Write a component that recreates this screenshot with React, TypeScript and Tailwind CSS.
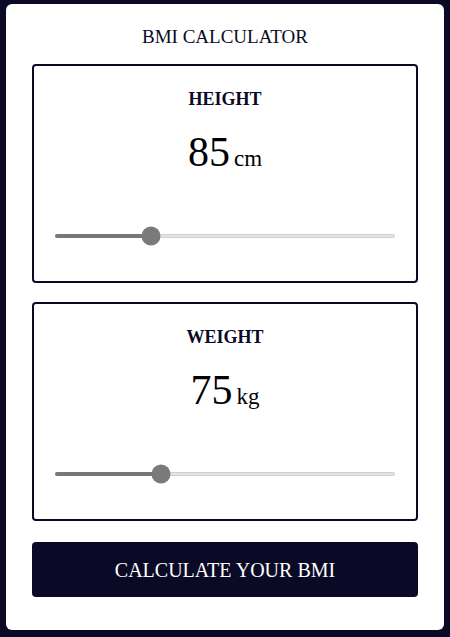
export default function App() {
  return (
    <div className="h-[637px] w-[450px] bg-[#0b0a26] px-[6px] pt-[4px] font-['Liberation_Serif','DejaVu_Serif',serif]">
      <div className="flex h-[626px] flex-col rounded-[6px] bg-white px-[26px] pt-[22px]">
        <h1 className="text-center text-[19px] leading-[22px] text-[#0b0a26]">BMI CALCULATOR</h1>

        <div className="mt-[16px] flex flex-col gap-[19px]">
          <Panel label="HEIGHT" value="85" unit="cm" pct={28} />
          <Panel label="WEIGHT" value="75" unit="kg" pct={31} />
        </div>

        <button className="mt-[21px] h-[55px] w-full rounded-[4px] bg-[#0b0a26] font-['Liberation_Serif',serif] text-[20px] text-white">
          CALCULATE YOUR BMI
        </button>
      </div>
    </div>
  );
}

function Panel({ label, value, unit, pct }: { label: string; value: string; unit: string; pct: number }) {
  return (
    <div className="flex h-[219px] flex-col items-center rounded-[4px] border-2 border-[#0b0a26] pt-[22px]">
      <h2 className="text-[18px] font-bold leading-[22px] text-[#0b0a26]">{label}</h2>
      <div className="mt-[20px] flex items-baseline gap-[4px] text-black">
        <span className="text-[42px] leading-[44px]">{value}</span>
        <span className="text-[23px]">{unit}</span>
      </div>

      {/* range track */}
      <div className="relative mt-[57px] h-[4px] w-[340px] rounded-full border border-[#d0d0d0] bg-[#e4e4e4]">
        <div className="-m-px h-[4px] rounded-full bg-[#777777]" style={{ width: `${pct}%` }} />
        <div
          className="absolute top-1/2 h-[19px] w-[19px] -translate-x-1/2 -translate-y-1/2 rounded-full bg-[#7a7a7a]"
          style={{ left: `${pct}%` }}
        />
      </div>
    </div>
  );
}
